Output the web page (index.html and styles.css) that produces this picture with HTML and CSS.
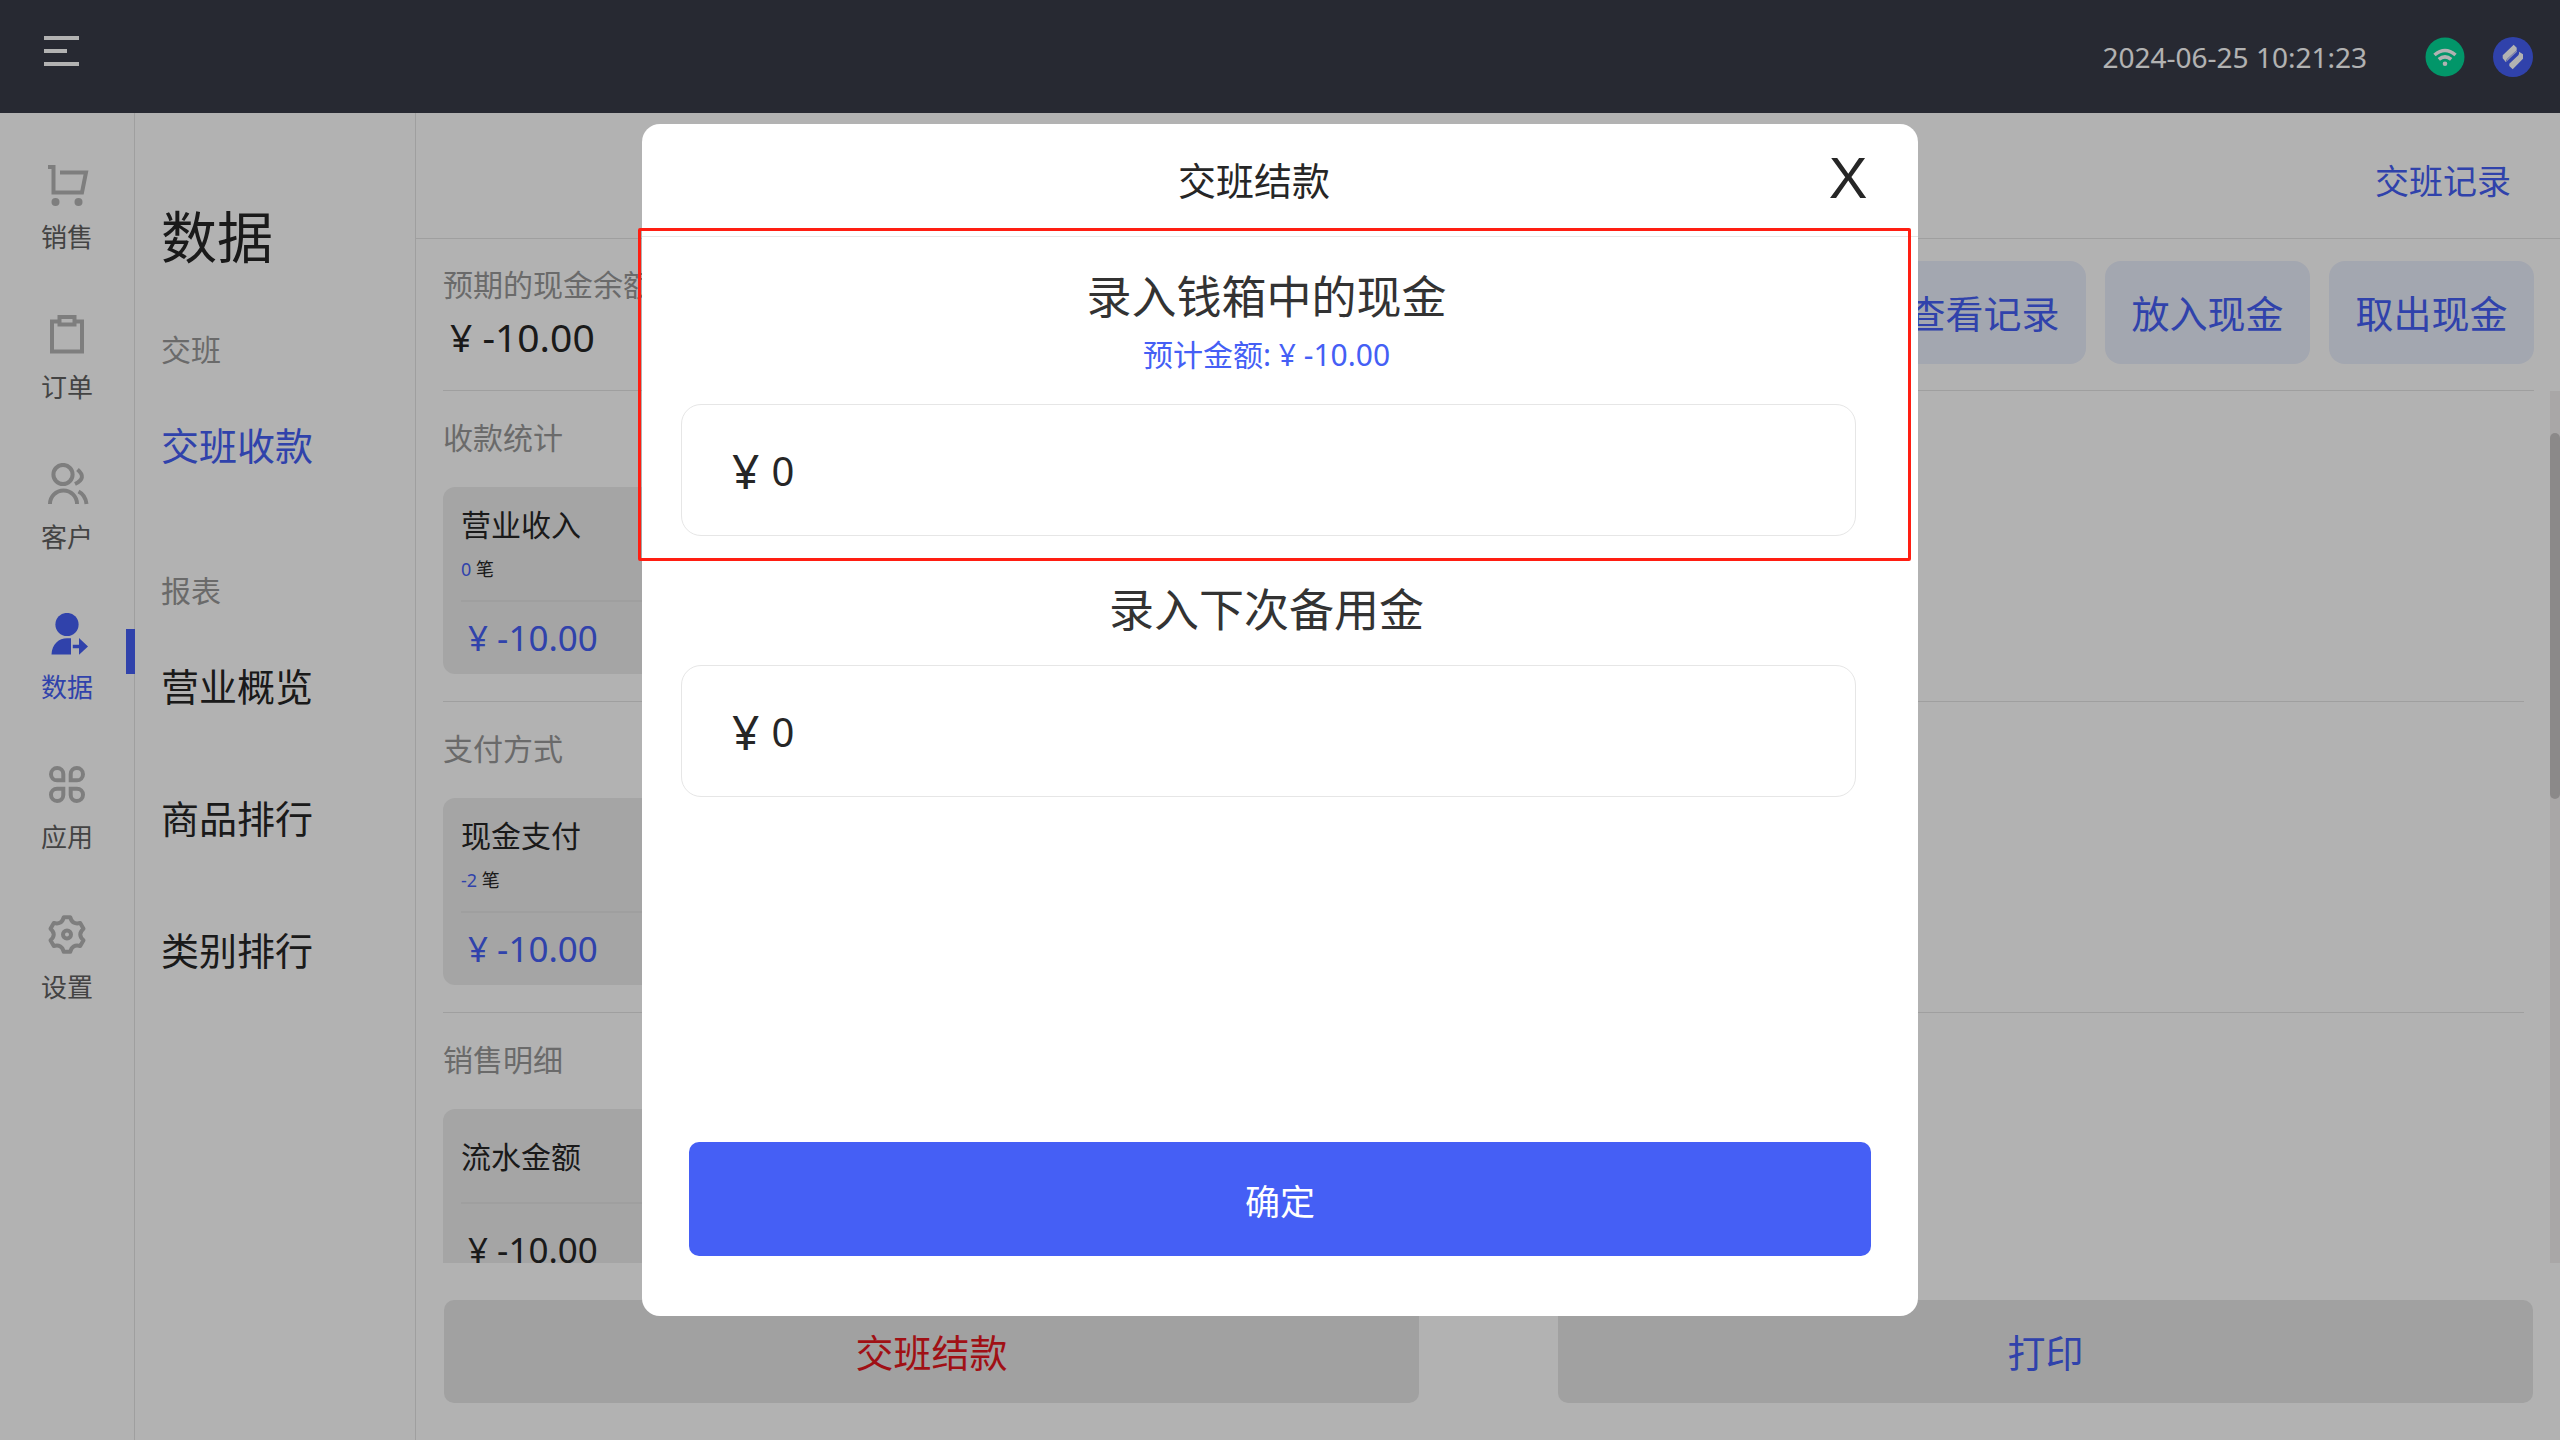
FILE: index.html
```html
<!DOCTYPE html>
<html lang="zh-CN">
<head>
<meta charset="utf-8">
<meta name="viewport" content="width=device-width, initial-scale=1">
<title>交班收款</title>
<link rel="stylesheet" href="styles.css">
</head>
<body>
<div class="app">
  <header class="topbar">
    <button class="menu-btn" type="button" aria-label="菜单">
      <svg width="35" height="32" viewBox="0 0 35 32" fill="currentColor"><path d="M0 0h35v4H0zM0 13h23v4H0zM0 26h35v4H0z"/></svg>
    </button>
    <div class="status">
      <time class="clock">2024-06-25 10:21:23</time>
      <svg class="wifi" width="40" height="40" viewBox="0 0 40 40"><circle cx="20" cy="20" r="19.5" fill="#03d797"/><g fill="none" stroke="#fff" stroke-width="3.6"><path d="M9.5 18Q20 9 30.5 18M13.8 22.4Q20 17.2 26.2 22.4"/></g><circle cx="20" cy="26.7" r="2.3" fill="#fff"/></svg>
      <svg class="brand" width="40" height="40" viewBox="0 0 40 40"><circle cx="20" cy="20" r="20" fill="#455ff5"/><path fill="#fff" d="M20.7 7.7l3 3v2.600l-9.400 8.400q-1.500 1.300-1.300 3.600l-3.300-4v-3z"/><path fill="#fff" d="M26 14.700l4 2.600v4.400L19.700 32.300l-3.400-3.300v-2.300l9-8.400q1.200-1.500.7-3.600z"/><path fill="#c9cdf7" d="M14.300 21.700l9.400-8.400 .3 1.500-7.500 7-3.500 3.500z"/></svg>
    </div>
  </header>

  <div class="workspace">
    <nav class="rail" aria-label="主导航">
      <a href="#sale" class="rail-item">
        <svg viewBox="0 0 44 44"><path d="M3 4h5.500v25.500H37l4-20H15" /><g class="solid"><circle cx="10.500" cy="39" r="4"/><circle cx="33.500" cy="39" r="4"/></g></svg>
        <span>销售</span></a>
      <a href="#order" class="rail-item">
        <svg viewBox="0 0 44 44"><rect x="7" y="8.500" width="30" height="30"/><rect x="14.500" y="4" width="15" height="7.500" fill="#fff"/></svg>
        <span>订单</span></a>
      <a href="#customer" class="rail-item">
        <svg viewBox="0 0 44 44"><circle cx="18" cy="11.500" r="9.600"/><path d="M5 41a13.500 13.500 0 0 1 27 0M32.500 6.500q10 8.500-2.500 14.500M33.500 28.500q7 3.500 8 12.500"/></svg>
        <span>客户</span></a>
      <a href="#data" class="rail-item active" aria-current="page">
        <svg viewBox="0 0 44 44"><g class="solid"><circle cx="22" cy="11.500" r="11.600"/><path d="M6.500 41.500C7 31 14 25.300 22 25.300h4v16.200zM27.800 31.700H34V25l9 8.500-9 8.300v-6.500h-6.200z"/></g></svg>
        <span>数据</span></a>
      <a href="#apps" class="rail-item">
        <svg viewBox="0 0 44 44"><path d="M18.300 17.300h-6.200A6.150 6.150 0 1 1 18.300 11.100zM25.700 17.300v-6.200A6.150 6.150 0 1 1 31.900 17.300zM18.300 25.700v6.200A6.150 6.150 0 1 1 12.100 25.700zM25.700 25.700h6.200A6.150 6.150 0 1 1 25.700 31.900z"/></svg>
        <span>应用</span></a>
      <a href="#settings" class="rail-item">
        <svg viewBox="0 0 44 44"><path stroke-linejoin="round" d="M18.700 4.200h6.600Q27 12 35.200 10l3.300 5.800Q32 21.500 38.500 27.200L35.200 33Q27 31 25.300 38.800h-6.600Q17 31 8.800 33L5.500 27.200Q12 21.500 5.500 15.800L8.800 10Q17 12 18.700 4.200z"/><circle cx="22" cy="21.500" r="4"/></svg>
        <span>设置</span></a>
    </nav>

    <nav class="subnav" aria-label="数据">
      <h1>数据</h1>
      <h2>交班</h2>
      <ul><li><a href="#shift" class="active">交班收款</a></li></ul>
      <h2>报表</h2>
      <ul>
        <li><a href="#overview">营业概览</a></li>
        <li><a href="#goods">商品排行</a></li>
        <li><a href="#category">类别排行</a></li>
      </ul>
    </nav>

    <main class="content">
      <div class="content-top"><a href="#records">交班记录</a></div>
      <div class="summary">
        <div class="balance">
          <div class="balance-label">预期的现金余额</div>
          <div class="balance-value">¥ -10.00</div>
        </div>
        <div class="actions">
          <button type="button">查看记录</button>
          <button type="button">放入现金</button>
          <button type="button">取出现金</button>
        </div>
      </div>
      <div class="report">
        <div class="sections">
          <section>
            <h3>收款统计</h3>
            <article class="card">
              <h4>营业收入</h4>
              <p class="count"><b>0</b> 笔</p>
              <p class="amount">¥ -10.00</p>
            </article>
          </section>
          <section>
            <h3>支付方式</h3>
            <article class="card">
              <h4>现金支付</h4>
              <p class="count"><b>-2</b> 笔</p>
              <p class="amount">¥ -10.00</p>
            </article>
          </section>
          <section>
            <h3>销售明细</h3>
            <article class="card plain">
              <h4>流水金额</h4>
              <p class="amount">¥ -10.00</p>
            </article>
          </section>
        </div>
        <div class="track"><div class="thumb"></div></div>
      </div>
      <footer class="footer">
        <button type="button" class="settle">交班结款</button>
        <button type="button">打印</button>
      </footer>
    </main>
  </div>
</div>

<div class="overlay">
  <form class="modal" role="dialog" aria-modal="true" aria-labelledby="modal-title">
    <header class="modal-head">
      <h2 id="modal-title">交班结款</h2>
      <button type="button" class="close" aria-label="关闭">X</button>
    </header>
    <div class="modal-body">
      <label class="field-title" for="cash">录入钱箱中的现金</label>
      <p class="expected">预计金额: ¥ -10.00</p>
      <div class="field"><span>¥</span><input id="cash" type="text" inputmode="decimal" value="0"></div>
      <label class="field-title next" for="reserve">录入下次备用金</label>
      <div class="field"><span>¥</span><input id="reserve" type="text" inputmode="decimal" value="0"></div>
    </div>
    <button type="button" class="confirm">确定</button>
    <div class="highlight"></div>
  </form>
</div>
</body>
</html>
```
FILE: styles.css
```css
* { box-sizing: border-box; margin: 0; padding: 0; }

:root {
  --blue: #455ff5;
  --ink: #262626;
  --muted: #999;
  --line: #e4e4e4;
}

body {
  font-family: "Noto Sans", "Noto Sans CJK SC", sans-serif;
  font-size: 30px;
  color: var(--ink);
  background: #fff;
}

h1, h2, h3, h4, b { font-weight: 400; }
a { color: inherit; text-decoration: none; }
ul { list-style: none; }
button, input { font: inherit; border: 0; background: none; color: inherit; outline: 0; }
button { cursor: pointer; }

.app { display: flex; flex-direction: column; height: 100vh; }

/* top bar */
.topbar {
  flex: none;
  height: 113px;
  padding: 0 27px 0 44px;
  display: flex;
  justify-content: space-between;
  align-items: center;
  background: #383b48;
  color: #fff;
}
.menu-btn { display: flex; margin-bottom: 10px; }
.status { display: flex; align-items: center; gap: 28px; }
.clock { font-size: 28px; margin-right: 30px; }

.workspace {
  flex: 1;
  min-height: 0;
  display: grid;
  grid-template-columns: 135px 281px minmax(0, 1fr);
}

/* icon rail */
.rail {
  padding-top: 50px;
  border-right: 1px solid var(--line);
  display: flex;
  flex-direction: column;
  gap: 58px;
}
.rail-item {
  position: relative;
  display: flex;
  flex-direction: column;
  align-items: center;
  gap: 12px;
  font-size: 26px;
  line-height: 36px;
  color: #616161;
}
.rail-item svg {
  width: 44px;
  height: 44px;
  fill: none;
  stroke: #b5b5b5;
  stroke-width: 4;
}
.rail-item .solid { fill: #b5b5b5; stroke: none; }
.rail-item.active { color: var(--blue); }
.rail-item.active .solid { fill: var(--blue); }
.rail-item.active::after {
  content: "";
  position: absolute;
  top: 16px;
  right: -1px;
  width: 9px;
  height: 45px;
  background: var(--blue);
}

/* secondary navigation */
.subnav {
  padding: 83px 0 0 26px;
  border-right: 1px solid var(--line);
}
.subnav h1 { font-size: 56px; line-height: 80px; margin-bottom: 50px; }
.subnav h2 { font-size: 30px; line-height: 48px; color: var(--muted); margin-bottom: 41px; }
.subnav ul { display: flex; flex-direction: column; gap: 72px; margin-bottom: 92px; }
.subnav a { display: block; font-size: 38px; line-height: 60px; }
.subnav .active { color: var(--blue); }

/* main column */
.content { display: flex; flex-direction: column; min-height: 0; }
.content-top {
  flex: none;
  height: 126px;
  padding: 8px 49px 0 0;
  border-bottom: 1px solid var(--line);
  display: flex;
  justify-content: flex-end;
  align-items: center;
  font-size: 34px;
  color: var(--blue);
}
.summary {
  flex: none;
  margin: 0 26px 0 27px;
  padding: 22px 0 25px;
  border-bottom: 1px solid var(--line);
  display: flex;
  justify-content: space-between;
}
.balance-label { line-height: 48px; color: var(--muted); }
.balance-value { font-size: 39px; line-height: 56px; padding-left: 7px; }
.actions { display: flex; gap: 19px; }
.actions button {
  width: 205px;
  height: 103px;
  padding-bottom: 3px;
  border-radius: 16px;
  background: #eaeffd;
  color: var(--blue);
  font-size: 38px;
}

.report { flex: 1; min-height: 0; display: flex; overflow: hidden; }
.sections { flex: 1; padding: 0 26px 0 27px; }
.sections section { padding-bottom: 27px; border-bottom: 1px solid var(--line); }
.sections h3 { font-size: 30px; line-height: 94px; padding-bottom: 2px; color: var(--muted); }
.card {
  width: 400px;
  height: 187px;
  padding: 16px 18px 0;
  border-radius: 12px;
  background: #ededed;
}
.card h4 { font-size: 30px; line-height: 44px; }
.count { font-size: 18px; line-height: 44px; padding-bottom: 9px; }
.count b { color: var(--blue); }
.amount {
  border-top: 2px solid var(--line);
  padding-left: 7px;
  font-size: 35px;
  line-height: 72px;
  color: var(--blue);
}
.plain { padding-top: 26px; }
.plain h4 { padding-bottom: 23px; }
.plain .amount { color: var(--ink); line-height: 92px; }

.track { width: 10px; padding-top: 42px; background: #f3efef; }
.thumb { height: 366px; border-radius: 5px; background: #c8c5c5; }

.footer {
  flex: none;
  display: flex;
  gap: 139px;
  padding: 37px 27px 37px 28px;
}
.footer button {
  flex: 1;
  height: 103px;
  padding-bottom: 3px;
  border-radius: 10px;
  background: #e7e7e7;
  color: var(--blue);
  font-size: 38px;
}
.footer .settle { color: #e6181f; }

/* dialog */
.overlay {
  position: fixed;
  inset: 0;
  padding: 124px 0;
  display: flex;
  justify-content: center;
  background: rgba(0, 0, 0, .3);
}
.modal {
  position: relative;
  width: calc(50% - 4px);
  display: flex;
  flex-direction: column;
  border-radius: 18px;
  background: #fff;
}
.modal-head {
  flex: none;
  height: 113px;
  padding: 0 50px 4px 0;
  border-bottom: 1px solid #e6e6e6;
  display: flex;
  align-items: center;
}
.modal-head h2 { flex: 1; padding-left: 38px; text-align: center; font-size: 38px; }
.close { width: 40px; font-family: "Liberation Sans", sans-serif; font-size: 58px; line-height: 64px; }
.modal-body { padding: 28px 62px 0 39px; }
.field-title {
  display: block;
  padding-right: 4px;
  text-align: center;
  font-size: 45px;
  line-height: 64px;
  color: #333;
}
.field-title.next { padding: 42px 4px 23px 0; }
.expected {
  margin: 6px 0 29px;
  padding-right: 4px;
  text-align: center;
  line-height: 40px;
  color: var(--blue);
}
.field {
  height: 132px;
  padding: 0 50px;
  border: 1px solid #e6e6e6;
  border-radius: 20px;
  display: flex;
  align-items: center;
  gap: 12px;
}
.field span { font-size: 48px; }
.field input { flex: 1; min-width: 0; font-size: 40px; }
.confirm {
  height: 114px;
  margin: auto 47px 60px;
  border-radius: 10px;
  background: var(--blue);
  color: #fff;
  font-size: 35px;
}
/* marks the cash entry area over the dialog */
.highlight {
  position: absolute;
  top: 104px;
  left: -4px;
  right: 7px;
  height: 333px;
  border: 3px solid #ff1e12;
  border-radius: 2px;
  pointer-events: none;
}
```
